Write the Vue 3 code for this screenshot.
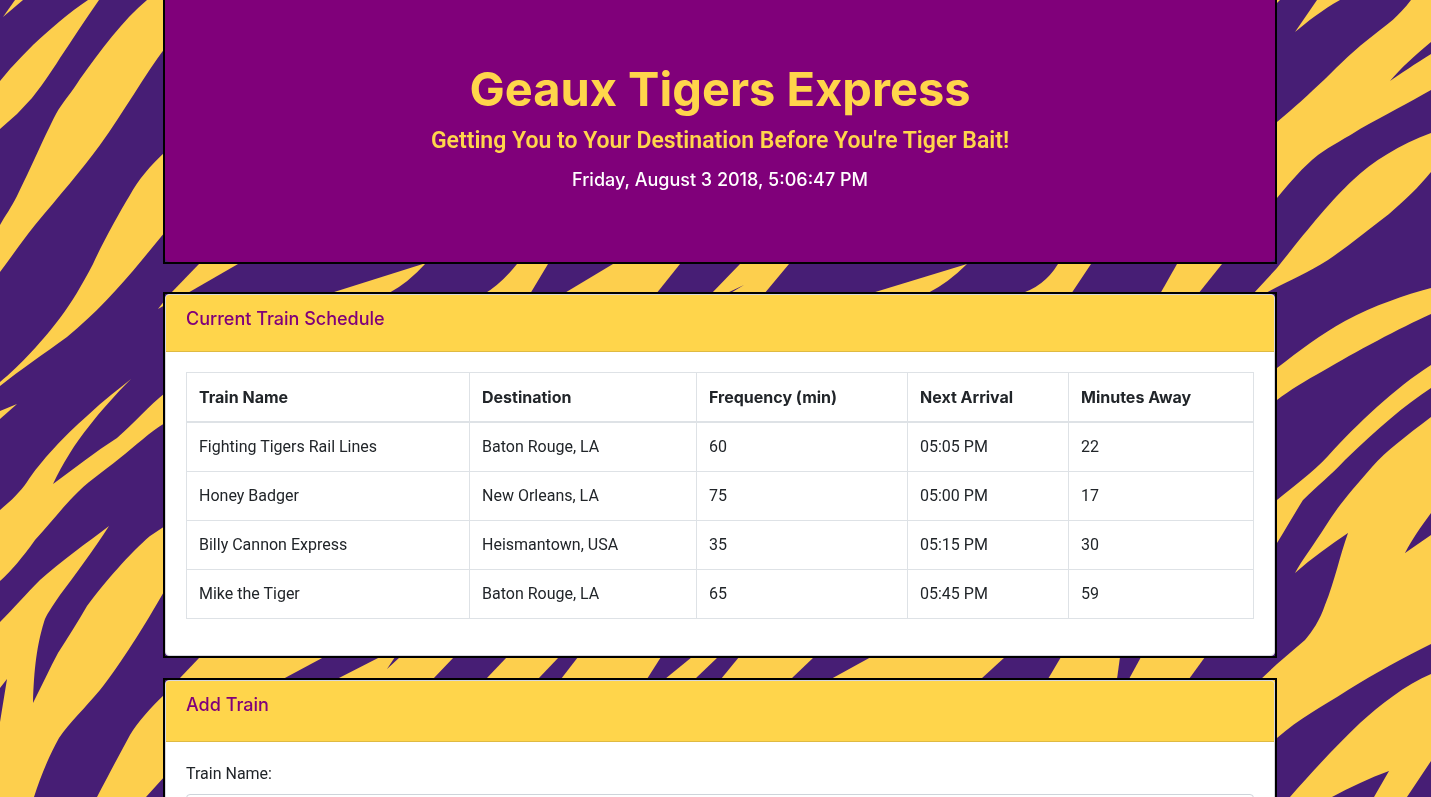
<script setup>
import { ref } from 'vue'

const trainName = ref('')
const columns = ['Train Name', 'Destination', 'Frequency (min)', 'Next Arrival', 'Minutes Away']
const trains = [
  ['Fighting Tigers Rail Lines', 'Baton Rouge, LA', '60', '05:05 PM', '22'],
  ['Honey Badger', 'New Orleans, LA', '75', '05:00 PM', '17'],
  ['Billy Cannon Express', 'Heismantown, USA', '35', '05:15 PM', '30'],
  ['Mike the Tiger', 'Baton Rouge, LA', '65', '05:45 PM', '59'],
]
</script>

<template>
  <div class="page">
    <svg class="stripes" viewBox="0 0 1431 797" preserveAspectRatio="xMidYMid slice" aria-hidden="true">
      <rect width="1431" height="797" fill="#471e75" />
      <g fill="#fdcf4d">
        <!-- left side -->
        <path d="M3 17L15 0H23Z" />
        <path d="M0 81L10 69Q22 56 33 45C50 29 70 12 88 0H99C85 20 72 40 60 58C50 74 40 88 32 98L17 114L0 129Z" />
        <path d="M147 0C123 20 100 51 80 79C72 92 62 103 56 114C45 135 30 170 17 196C11 208 5 216 0 225V272C12 256 23 240 35 225C60 195 80 172 100 145C125 110 144 76 165 48V0Z" />
        <path d="M165 152C150 166 138 180 130 195C118 215 103 242 93 264C82 285 72 302 60 318C45 338 20 366 0 382V386C20 370 45 353 67 337C95 314 118 289 142 260L165 232Z" />
        <path d="M0 411L17 404L0 419Z" />
        <path d="M0 510C12 500 20 492 27 482C40 462 65 435 87 416C105 399 120 388 131 379C115 395 100 412 90 425C75 443 62 465 53 484C75 468 95 452 117 438C135 422 150 405 165 393V423C150 432 135 446 120 458C100 474 87 482 73 497C62 508 50 524 35 540C28 550 12 571 0 581Z" />
        <path d="M0 622C15 607 25 595 40 580C60 562 88 542 109 526C95 548 75 575 60 595C52 607 46 615 44 622C37 645 34 668 33 703C42 685 50 668 58 653C68 637 78 622 87 606C105 582 130 553 150 536L165 526V590C145 625 120 665 100 690C85 708 70 722 59 738C48 758 40 778 34 797H0V722L7 679L0 688Z" />
        <path d="M165 694C150 708 138 722 130 735C118 757 107 778 97 797H146L165 776Z" />
        <!-- right side -->
        <path d="M1317 0L1295 32C1307 22 1322 10 1340 0Z" />
        <path d="M1277 0H1280L1277 3Z" />
        <path d="M1411 0C1398 17 1388 24 1375 34C1355 49 1340 64 1325 79C1308 95 1295 107 1277 122V198C1292 180 1302 168 1318 155C1330 146 1348 137 1360 129C1385 115 1410 102 1431 90V54C1415 64 1400 74 1390 81C1400 69 1415 55 1431 42V0Z" />
        <path d="M1431 133C1400 144 1372 162 1353 180C1330 201 1300 239 1277 268L1253 294H1264C1290 280 1306 274 1328 260C1350 245 1368 230 1389 214C1405 200 1418 188 1431 172Z" />
        <path d="M1277 368C1300 350 1320 335 1345 321C1375 305 1405 295 1431 288V314C1400 328 1355 352 1323 371C1305 381 1290 390 1277 400Z" />
        <path d="M1277 500C1295 485 1312 473 1328 456C1358 423 1395 388 1431 365V388C1405 405 1378 428 1345 460C1330 476 1318 485 1303 500C1296 511 1287 527 1277 543Z" />
        <path d="M1431 417C1405 437 1387 450 1372 467C1352 490 1337 507 1325 527C1315 543 1302 560 1295 573C1312 558 1330 545 1348 533C1340 555 1335 580 1325 605C1320 620 1312 632 1305 640L1277 664L1260 680V750L1277 738C1300 718 1320 708 1348 690C1375 673 1405 657 1431 644V535L1405 553C1413 538 1420 528 1431 513Z" />
        <path d="M1431 674C1405 685 1380 705 1360 723C1335 747 1310 774 1290 797H1332C1350 787 1370 778 1389 771L1374 797H1407L1431 761Z" />
        <!-- band below the banner -->
        <path d="M199 264H238L186 294H170Z" />
        <path d="M165 300L158 309L165 305Z" />
        <path d="M426 263L331 293H389Q408 283 426 263Z" />
        <path d="M517 264H548L530 294H484Q501 284 517 264Z" />
        <path d="M613 264H680L656 294H563Z" />
        <path d="M740 264H789L764 294H729L744 285L725 294H711Z" />
        <path d="M967 264L872 293H928Q948 283 967 264Z" />
        <path d="M1058 264H1091L1071 294H1019Q1044 287 1058 264Z" />
        <path d="M1177 264H1222L1198 294H1160Z" />
        <!-- band between the cards -->
        <path d="M200 657H324L283 679H179Z" />
        <path d="M380 657H395L387 669L400 657H454L433 679H337Z" />
        <path d="M507 657H559L538 679H486Z" />
        <path d="M578 657H661L647 679H561Z" />
        <path d="M692 657H718L695 679H665Z" />
        <path d="M739 657H814L791 679H721Z" />
        <path d="M871 657H1005L981 679H831Z" />
        <path d="M1061 657H1120L1117 679H1048Z" />
        <path d="M1141 657H1205L1189 679H1129Z" />
      </g>
    </svg>

    <main class="container">
      <header class="frame banner-frame">
        <div class="banner">
          <h1>Geaux Tigers Express</h1>
          <h2>Getting You to Your Destination Before You're Tiger Bait!</h2>
          <p>Friday, August 3 2018, 5:06:47 PM</p>
        </div>
      </header>

      <section class="frame">
        <div class="card">
          <div class="card-header">
            <h3>Current Train Schedule</h3>
          </div>
          <div class="card-body">
            <table>
              <colgroup>
                <col class="col-name" />
                <col class="col-destination" />
                <col class="col-frequency" />
                <col class="col-arrival" />
                <col />
              </colgroup>
              <thead>
                <tr>
                  <th v-for="column in columns" :key="column" scope="col">{{ column }}</th>
                </tr>
              </thead>
              <tbody>
                <tr v-for="train in trains" :key="train[0]">
                  <td v-for="(cell, i) in train" :key="i">{{ cell }}</td>
                </tr>
              </tbody>
            </table>
          </div>
        </div>
      </section>

      <section class="frame">
        <div class="card">
          <div class="card-header form-header">
            <h3>Add Train</h3>
          </div>
          <form class="card-body" @submit.prevent>
            <label for="train-name">Train Name:</label>
            <input id="train-name" v-model="trainName" type="text" />
          </form>
        </div>
      </section>
    </main>
  </div>
</template>

<style>
body {
  margin: 0;
  background: #471e75;
}
</style>

<style scoped>
* {
  box-sizing: border-box;
}
.page {
  height: 100vh;
  overflow: hidden;
  padding-left: 9px;
  color: #212529;
  font-family: Roboto, Inter, "Liberation Sans", sans-serif;
  font-size: 16px;
  line-height: 24px;
}
.stripes {
  position: fixed;
  inset: 0;
  width: 100%;
  height: 100%;
}
.container {
  position: relative;
  display: flex;
  flex-direction: column;
  gap: 20px;
  max-width: 1114px;
  margin: 0 auto;
}
.frame {
  border: 2px solid #000;
}
.banner-frame {
  border-top: 0;
  margin-bottom: 8px;
}
.banner {
  padding: 60px 32px 70px;
  border-radius: 0 0 5px 5px;
  background: #80007a;
  color: #ffd54b;
  text-align: center;
}
h1,
h2,
h3,
p {
  margin: 0;
}
h1 {
  margin-bottom: 8px;
  font-family: Inter, Roboto, sans-serif;
  font-size: 47px;
  font-weight: 700;
  line-height: 58px;
}
h2 {
  margin-bottom: 12px;
  font-size: 23px;
  font-weight: 600;
  line-height: 30px;
}
p {
  color: #fff;
  font-family: Inter, Roboto, sans-serif;
  font-size: 18px;
  font-weight: 500;
  line-height: 24px;
}
.card {
  border: 1px solid #d6d6de;
  border-radius: 4px;
  background: #fff;
}
.card-header {
  padding: 12px 20px 20px;
  border-bottom: 1px solid #dfba42;
  border-radius: 3px 3px 0 0;
  background: #ffd54b;
}
.form-header {
  padding-bottom: 24px;
}
h3 {
  color: #80007a;
  font-family: Inter, Roboto, sans-serif;
  font-size: 18px;
  font-weight: 500;
  line-height: 24px;
}
.card-body {
  padding: 20px;
}
table {
  width: 100%;
  margin-bottom: 16px;
  border-collapse: collapse;
  table-layout: fixed;
}
.col-name {
  width: 283px;
}
.col-destination {
  width: 227px;
}
.col-frequency {
  width: 211px;
}
.col-arrival {
  width: 161px;
}
th,
td {
  padding: 12px;
  border: 1px solid #dee2e6;
  text-align: left;
}
th {
  border-bottom-width: 2px;
  font-family: Inter, Roboto, sans-serif;
  font-weight: 700;
}
label {
  display: block;
  margin-bottom: 8px;
}
input {
  display: block;
  width: 100%;
  height: 38px;
  padding: 6px 12px;
  border: 1px solid #ced4da;
  border-radius: 4px;
  background: #fff;
  font: inherit;
}
</style>
